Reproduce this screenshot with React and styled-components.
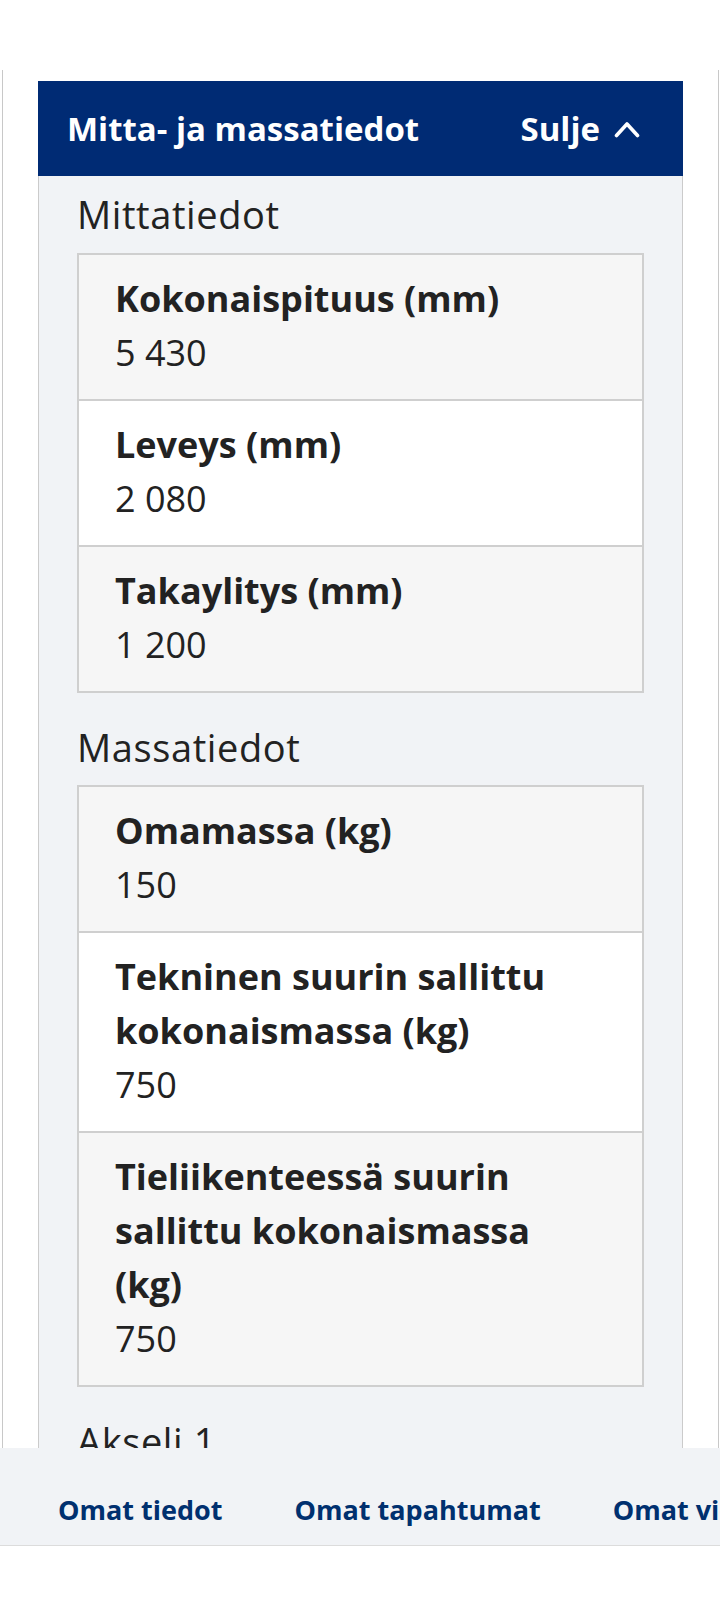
import styled, { createGlobalStyle } from "styled-components";

const GlobalStyle = createGlobalStyle`
  body {
    margin: 0;
    background: #fff;
    font-family: "Open Sans", "Liberation Sans", sans-serif;
    color: #222;
  }
`;

const Page = styled.div`
  width: 720px;
  height: 1600px;
  display: flex;
  flex-direction: column;
  overflow: hidden;
`;

const Content = styled.div`
  flex: 1;
  min-height: 0;
  overflow: hidden;
  padding-top: 70px;
  display: flex;
  flex-direction: column;
`;

const Card = styled.div`
  flex: 1;
  margin: 0 1px 0 2px;
  padding: 11px 35px 0;
  border-left: 1px solid #c8c8c8;
  border-right: 1px solid #c8c8c8;
`;

const PanelHeader = styled.div`
  height: 95px;
  background: #002b74;
  color: #fff;
  display: flex;
  align-items: center;
  justify-content: space-between;
  padding: 0 43px 0 29px;
  font-size: 33px;
  font-weight: 700;
`;

const Toggle = styled.button`
  display: flex;
  align-items: center;
  gap: 14px;
  border: 0;
  padding: 0;
  background: none;
  color: inherit;
  font: inherit;
  cursor: pointer;
`;

const PanelBody = styled.div`
  background: #f1f3f6;
  border-left: 1px solid #cbcbcb;
  border-right: 1px solid #cbcbcb;
  padding: 16px 38px 40px;
`;

const SectionTitle = styled.h3`
  margin: ${(p) => (p.$first ? "0" : "32px")} 0 15px;
  font-size: 38px;
  line-height: 1.2;
  font-weight: 400;
  letter-spacing: 0.6px;
  color: #222;
`;

const Table = styled.div`
  border: 2px solid #cfcfcf;
`;

const Row = styled.div`
  padding: 17px 36px 19px;
  background: ${(p) => (p.$odd ? "#f6f6f6" : "#fff")};
  font-size: 36px;
  line-height: 54px;
  & + & {
    border-top: 2px solid #cfcfcf;
  }
`;

const Label = styled.div`
  font-weight: 700;
`;

const Value = styled.div`
  font-weight: 400;
`;

const BottomNav = styled.nav`
  flex-shrink: 0;
  display: flex;
  gap: 72px;
  padding: 42px 0 15px 58px;
  background: #f1f3f6;
  border-bottom: 1px solid #dcdcdc;
  white-space: nowrap;
  overflow: hidden;
`;

const NavLink = styled.a`
  font-size: 27px;
  line-height: 40px;
  font-weight: 700;
  color: #00306f;
  text-decoration: none;
`;

const BottomSpace = styled.div`
  height: 54px;
  flex-shrink: 0;
  background: #fff;
`;

const sections = [
  {
    title: "Mittatiedot",
    rows: [
      ["Kokonaispituus (mm)", "5 430"],
      ["Leveys (mm)", "2 080"],
      ["Takaylitys (mm)", "1 200"],
    ],
  },
  {
    title: "Massatiedot",
    rows: [
      ["Omamassa (kg)", "150"],
      ["Tekninen suurin sallittu kokonaismassa (kg)", "750"],
      ["Tieliikenteessä suurin sallittu kokonaismassa (kg)", "750"],
    ],
  },
  {
    title: "Akseli 1",
    rows: [
      ["Tekninen suurin sallittu massa (kg)", "750"],
      ["Raideleveys (mm)", "1 800"],
    ],
  },
];

const ChevronUp = () => (
  <svg width="26" height="18" viewBox="0 0 26 18" fill="none">
    <polyline
      points="2.5,15.5 13,4 23.5,15.5"
      stroke="#fff"
      strokeWidth="3.6"
      strokeLinecap="round"
      strokeLinejoin="round"
    />
  </svg>
);

export default function App() {
  return (
    <Page>
      <GlobalStyle />
      <Content>
        <Card>
          <PanelHeader>
            <span>Mitta- ja massatiedot</span>
            <Toggle>
              Sulje
              <ChevronUp />
            </Toggle>
          </PanelHeader>
          <PanelBody>
            {sections.map((s, i) => (
              <div key={s.title}>
                <SectionTitle $first={i === 0}>{s.title}</SectionTitle>
                <Table>
                  {s.rows.map(([label, value], j) => (
                    <Row key={label} $odd={j % 2 === 0}>
                      <Label>{label}</Label>
                      <Value>{value}</Value>
                    </Row>
                  ))}
                </Table>
              </div>
            ))}
          </PanelBody>
        </Card>
      </Content>
      <BottomNav>
        <NavLink href="#">Omat tiedot</NavLink>
        <NavLink href="#">Omat tapahtumat</NavLink>
        <NavLink href="#">Omat viestit</NavLink>
      </BottomNav>
      <BottomSpace />
    </Page>
  );
}
